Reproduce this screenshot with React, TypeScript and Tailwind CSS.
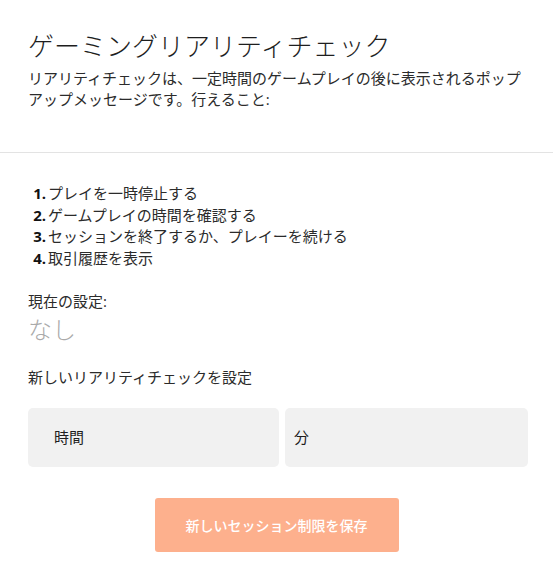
const steps = [
  "プレイを一時停止する",
  "ゲームプレイの時間を確認する",
  "セッションを終了するか、プレイーを続ける",
  "取引履歴を表示",
]

export default function App() {
  return (
    <div
      className="w-[553px] min-h-[579px] bg-white text-[#2b2b2b]"
      style={{ fontFamily: '"Open Sans", "Noto Sans CJK JP", sans-serif' }}
    >
      <div className="px-[28px] pt-[28px] pb-[42px] border-b border-[#e3e3e3]">
        <h1 className="text-[26px] leading-[36px] font-light text-[#1e1e1e]">ゲーミングリアリティチェック</h1>
        <p className="mt-[4px] text-[15px] leading-[21px]">
          リアリティチェックは、一定時間のゲームプレイの後に表示されるポップアップメッセージです。行えること:
        </p>
      </div>

      <div className="pl-[28px] pr-[25px] pt-[30px]">
        <ol className="text-[15px] leading-[21.5px]">
          {steps.map((step, i) => (
            <li key={i} className="flex">
              <span className="w-[18px] text-right font-bold text-[#111]">{i + 1}.</span>
              <span className="ml-[2px]">{step}</span>
            </li>
          ))}
        </ol>

        <p className="mt-[22px] text-[15px] leading-[21px]">現在の設定:</p>
        <p className="mt-[3px] text-[24px] leading-[30px] text-[#aaaaaa] font-light">なし</p>

        <p className="mt-[22px] text-[15px] leading-[21px]">新しいリアリティチェックを設定</p>

        <div className="mt-[20px] flex gap-[6px]">
          <div className="w-[251px] h-[59px] rounded-[5px] bg-[#f1f1f1] flex items-center pl-[26px] text-[15px] text-[#1e1e1e]">
            時間
          </div>
          <div className="w-[243px] h-[59px] rounded-[5px] bg-[#f1f1f1] flex items-center pl-[9px] text-[15px] text-[#1e1e1e]">
            分
          </div>
        </div>

        <div className="mt-[31px] flex justify-center pr-[3px]">
          <button className="w-[244px] h-[54px] rounded-[3px] bg-[#fdb08d] text-white text-[14px] font-medium">
            新しいセッション制限を保存
          </button>
        </div>
      </div>
    </div>
  )
}
